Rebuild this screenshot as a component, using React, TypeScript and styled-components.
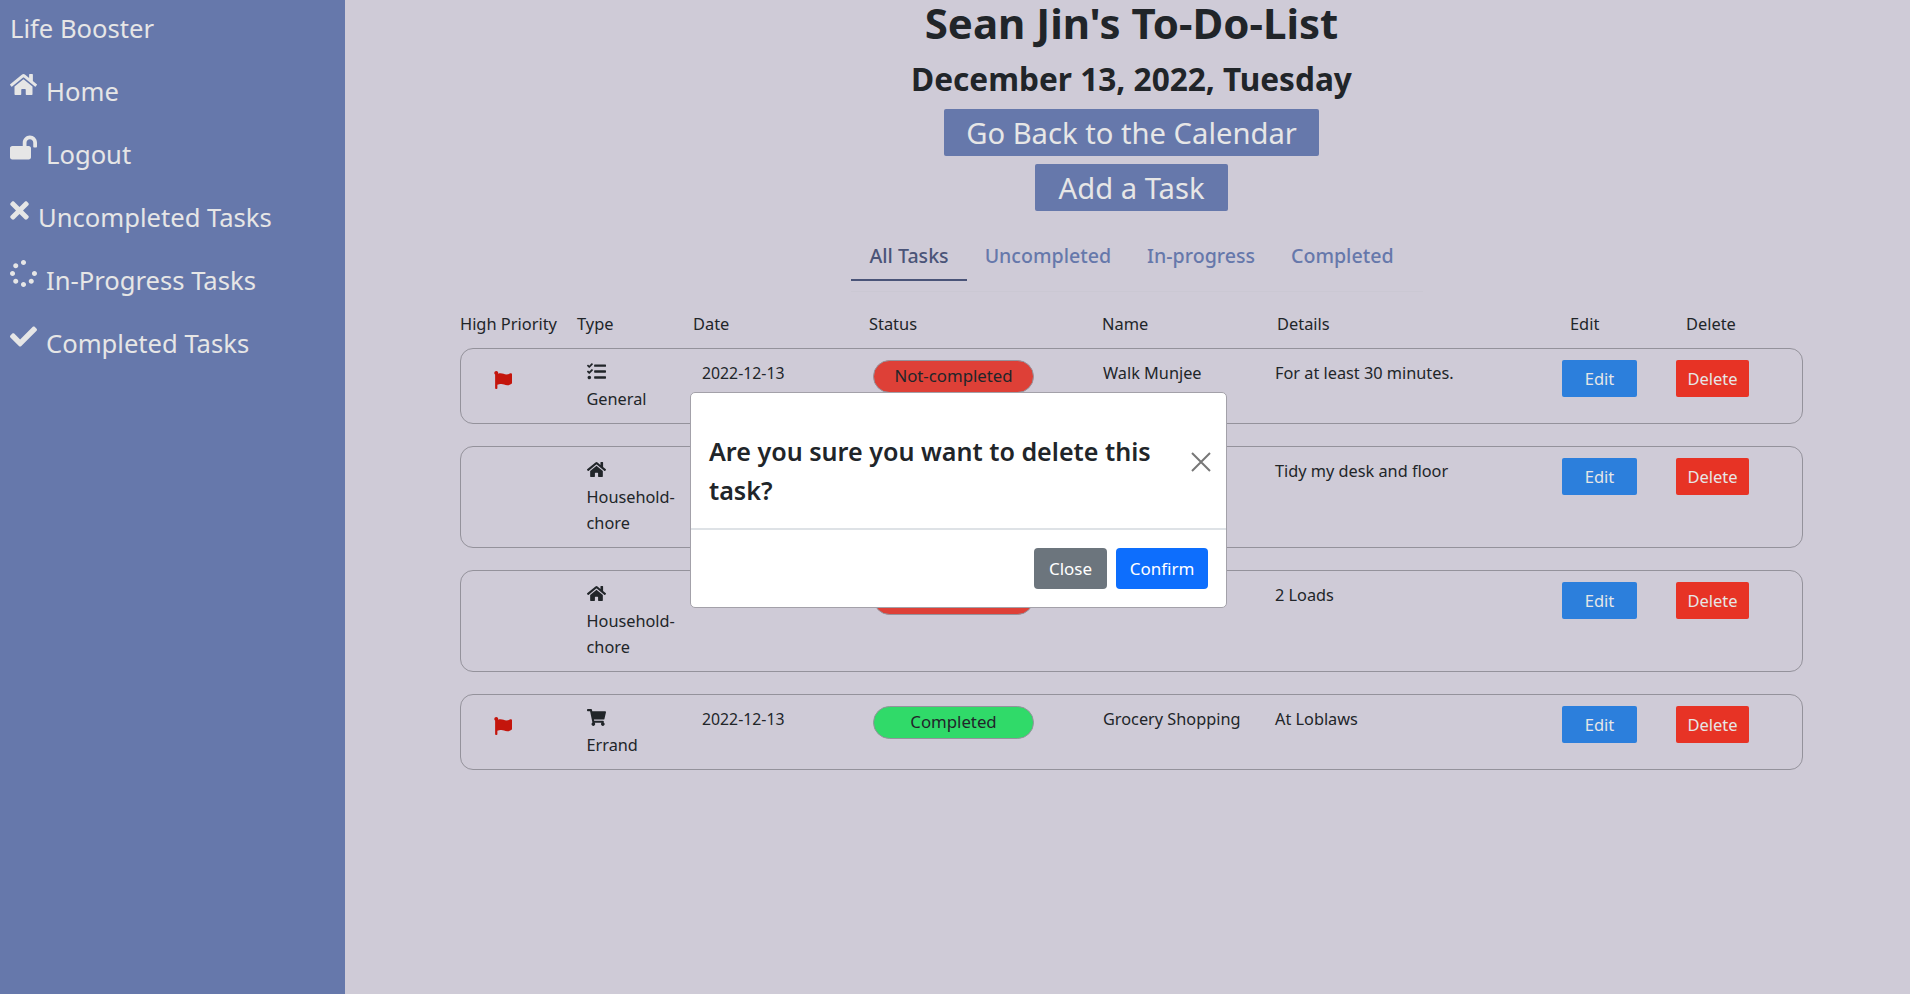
import { createGlobalStyle, styled } from 'styled-components';
import { FaCheck, FaFlag, FaHome, FaLockOpen, FaShoppingCart, FaSpinner, FaTasks, FaTimes } from 'react-icons/fa';
import type { ReactNode } from 'react';

const GlobalStyle = createGlobalStyle`
  html, body { margin: 0; height: 100%; }
  body {
    background: #cfcbd7;
    color: #212529;
    font-family: "Noto Sans", "Open Sans", sans-serif;
  }
  * { box-sizing: border-box; }
`;

const Page = styled.div`
  display: flex;
  min-height: 994px;
`;

const Sidebar = styled.nav`
  width: 345px;
  flex: none;
  background: #6678ab;
  color: #e6e6e6;
  padding: 12px 10px 0;
  font-size: 25.6px;
`;

const Brand = styled.div`
  line-height: 34px;
  margin-bottom: 29px;
`;

const NavItem = styled.a<{ $gap: number }>`
  display: flex;
  align-items: flex-start;
  gap: ${p => p.$gap}px;
  height: 63px;
  line-height: 33px;
  & > svg {
    flex: none;
    margin-top: -4px;
  }
`;

const NarrowIcon = styled(FaTimes)`
  width: 19px;
`;

const Main = styled.main`
  flex: 1;
  padding: 0 107px 0 115px;
  min-width: 0;
`;

const Head = styled.header`
  display: flex;
  flex-direction: column;
  align-items: center;
`;

const Title = styled.h1`
  margin: 0;
  font-size: 42px;
  font-weight: 700;
  line-height: 46px;
`;

const DateLine = styled.h2`
  margin: 10px 0 7px;
  font-size: 31.6px;
  font-weight: 700;
  line-height: 46px;
`;

const HeadButton = styled.button<{ $width: number }>`
  width: ${p => p.$width}px;
  height: 47px;
  margin-bottom: 8px;
  border: 0;
  border-radius: 2px;
  background: #6678ab;
  color: #e6e6e6;
  font-family: inherit;
  font-size: 29.2px;
  padding: 0;
`;

const Tabs = styled.div`
  position: relative;
  display: flex;
  justify-content: center;
  margin-top: 15px;
  &::after {
    content: '';
    position: absolute;
    left: 391px;
    width: 572px;
    bottom: -11px;
    height: 1px;
    background: #cbc8d3;
  }
`;

const Tab = styled.a<{ $active?: boolean }>`
  padding: 0 18px;
  height: 47px;
  line-height: 43px;
  font-size: 19.6px;
  font-weight: 500;
  color: ${p => (p.$active ? '#4a5478' : '#6678ab')};
  border-bottom: 2px solid ${p => (p.$active ? '#4a5478' : 'transparent')};
`;

const HeaderRow = styled.div`
  display: grid;
  grid-template-columns: 117px 116px 176px 233px 175px 293px 116px 1fr;
  margin-top: 30px;
  height: 25px;
  line-height: 25px;
  font-size: 16.4px;
  white-space: nowrap;
`;

const Cards = styled.div`
  display: flex;
  flex-direction: column;
  gap: 22px;
  margin-top: 12px;
`;

const Card = styled.div<{ $height: number }>`
  display: grid;
  grid-template-columns: 126px 115px 171px 230px 172px 287px 114px 1fr;
  height: ${p => p.$height}px;
  padding-top: 11px;
  border: 1px solid #94929b;
  border-radius: 13px;
  font-size: 16.3px;
  line-height: 26px;
`;

const FlagCell = styled.div`
  color: #c4150c;
  padding: 9px 0 0 33px;
  font-size: 18px;
`;

const TypeCell = styled.div`
  margin-left: -0.5px;
  svg { display: block; font-size: 19px; margin: 2px 0 5px; }
`;

const DateCell = styled.div`
  font-size: 15.8px;
`;

const StatusPill = styled.div<{ $done?: boolean }>`
  width: 161px;
  height: 33px;
  line-height: 30px;
  font-size: 16.8px;
  text-align: center;
  border-radius: 17px;
  border: 1px solid #94929b;
  background: ${p => (p.$done ? '#30da69' : '#de4037')};
`;

const RowButton = styled.button<{ $kind: 'edit' | 'delete' }>`
  width: ${p => (p.$kind === 'edit' ? 75 : 73)}px;
  height: 37px;
  border: 0;
  border-radius: 2px;
  background: ${p => (p.$kind === 'edit' ? '#2c7fdc' : '#e73325')};
  color: #e6e6e6;
  font-family: inherit;
  font-size: 16.5px;
  padding: 0 0 1px;
`;

const Modal = styled.div`
  position: absolute;
  left: 690px;
  top: 392px;
  width: 537px;
  height: 216px;
  background: #fff;
  border: 1px solid #a3a1a9;
  border-radius: 5px;
`;

const ModalHeader = styled.div`
  display: flex;
  align-items: center;
  justify-content: space-between;
  height: 137px;
  padding: 21px 15px 0 18px;
  border-bottom: 2px solid #dee2e6;
`;

const ModalTitle = styled.h5`
  margin: 0;
  width: 450px;
  font-size: 25.1px;
  font-weight: 600;
  line-height: 39px;
`;

const CloseX = styled.svg`
  width: 20px;
  height: 20px;
  margin-top: -19px;
  stroke: #777;
  stroke-width: 2;
`;

const ModalFooter = styled.div`
  display: flex;
  justify-content: flex-end;
  gap: 9px;
  padding: 18px 18px 0;
`;

const ModalButton = styled.button<{ $primary?: boolean }>`
  height: 41px;
  width: ${p => (p.$primary ? 92 : 73)}px;
  border: 0;
  border-radius: 4px;
  background: ${p => (p.$primary ? '#0d6efd' : '#6c757d')};
  color: #fff;
  font-family: inherit;
  font-size: 17px;
  padding: 0 0 1px;
`;

type Task = {
  high: boolean;
  icon: ReactNode;
  type: string;
  name: string;
  details: string;
  done?: boolean;
  status: string;
  height: number;
};

const tasks: Task[] = [
  { high: true, icon: <FaTasks />, type: 'General', name: 'Walk Munjee', details: 'For at least 30 minutes.', status: 'Not-completed', height: 76 },
  { high: false, icon: <FaHome />, type: 'Household-chore', name: 'Clean my room', details: 'Tidy my desk and floor', status: 'Not-completed', height: 102 },
  { high: false, icon: <FaHome />, type: 'Household-chore', name: 'Do laundry', details: '2 Loads', status: 'Not-completed', height: 102 },
  { high: true, icon: <FaShoppingCart />, type: 'Errand', name: 'Grocery Shopping', details: 'At Loblaws', status: 'Completed', done: true, height: 76 },
];

const App = () => {
  return (
    <Page>
      <GlobalStyle />
      <Sidebar>
        <Brand>Life Booster</Brand>
        <NavItem $gap={9}><FaHome size={27} />Home</NavItem>
        <NavItem $gap={9}><FaLockOpen size={27} />Logout</NavItem>
        <NavItem $gap={9}><NarrowIcon size={27} />Uncompleted Tasks</NavItem>
        <NavItem $gap={9}><FaSpinner size={27} />In-Progress Tasks</NavItem>
        <NavItem $gap={9}><FaCheck size={27} />Completed Tasks</NavItem>
      </Sidebar>
      <Main>
        <Head>
          <Title>Sean Jin's To-Do-List</Title>
          <DateLine>December 13, 2022, Tuesday</DateLine>
          <HeadButton $width={375}>Go Back to the Calendar</HeadButton>
          <HeadButton $width={193}>Add a Task</HeadButton>
        </Head>
        <Tabs>
          <Tab $active>All Tasks</Tab>
          <Tab>Uncompleted</Tab>
          <Tab>In-progress</Tab>
          <Tab>Completed</Tab>
        </Tabs>
        <HeaderRow>
          <span>High Priority</span>
          <span>Type</span>
          <span>Date</span>
          <span>Status</span>
          <span>Name</span>
          <span>Details</span>
          <span>Edit</span>
          <span>Delete</span>
        </HeaderRow>
        <Cards>
          {tasks.map(task => (
            <Card key={task.name} $height={task.height}>
              <FlagCell>{task.high && <FaFlag />}</FlagCell>
              <TypeCell>
                {task.icon}
                {task.type}
              </TypeCell>
              <DateCell>2022-12-13</DateCell>
              <div><StatusPill $done={task.done}>{task.status}</StatusPill></div>
              <div>{task.name}</div>
              <div>{task.details}</div>
              <div><RowButton $kind="edit">Edit</RowButton></div>
              <div><RowButton $kind="delete">Delete</RowButton></div>
            </Card>
          ))}
        </Cards>
      </Main>
      <Modal>
        <ModalHeader>
          <ModalTitle>Are you sure you want to delete this task?</ModalTitle>
          <CloseX viewBox="0 0 20 20"><path d="M1 1L19 19M19 1L1 19" /></CloseX>
        </ModalHeader>
        <ModalFooter>
          <ModalButton>Close</ModalButton>
          <ModalButton $primary>Confirm</ModalButton>
        </ModalFooter>
      </Modal>
    </Page>
  );
};

export default App;
